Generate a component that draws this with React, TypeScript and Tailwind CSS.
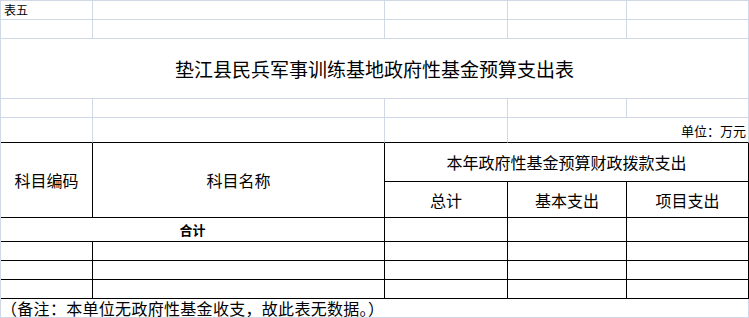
export default function App() {
  // light = excel gridline, dark = table border
  const lt = "border-r border-b border-r-[#d0d7e5] border-b-[#d0d7e5]";
  const ltB = "border-r border-b border-r-[#d0d7e5] border-b-black";
  const bk = "border-r border-b border-black";

  return (
    <div className="w-[749px] h-[318px] bg-white text-black font-['Noto_Sans_CJK_SC',sans-serif] border-t border-l border-[#d0d7e5] grid grid-cols-[92px_292px_123px_119px_122px] grid-rows-[19px_19px_60px_19px_25px_39px_36px_24px_19px_19px_19px_19px] leading-none">
      {/* row 0 */}
      <div className={`${lt} flex items-center pl-[3px] text-[12px]`}>表五</div>
      <div className={lt}></div>
      <div className={lt}></div>
      <div className={lt}></div>
      <div className={lt}></div>

      {/* row 1 */}
      <div className={lt}></div>
      <div className={lt}></div>
      <div className={lt}></div>
      <div className={lt}></div>
      <div className={lt}></div>

      {/* title */}
      <div className={`${lt} col-span-5 flex items-center justify-center text-[19px]`}>
        垫江县民兵军事训练基地政府性基金预算支出表
      </div>

      {/* row 3 */}
      <div className={lt}></div>
      <div className={lt}></div>
      <div className={lt}></div>
      <div className={lt}></div>
      <div className={lt}></div>

      {/* unit row */}
      <div className={ltB}></div>
      <div className={ltB}></div>
      <div className={ltB}></div>
      <div className={`${ltB} col-span-2 flex items-center justify-end pr-[2px] text-[13px]`}>单位：万元</div>

      {/* header */}
      <div className={`${bk} row-span-2 flex items-center justify-center text-[16px]`}>科目编码</div>
      <div className={`${bk} row-span-2 flex items-center justify-center text-[16px]`}>科目名称</div>
      <div className={`${bk} col-span-3 flex items-center justify-center text-[16px]`}>本年政府性基金预算财政拨款支出</div>
      <div className={`${bk} flex items-center justify-center text-[16px]`}>总计</div>
      <div className={`${bk} flex items-center justify-center text-[16px]`}>基本支出</div>
      <div className={`${bk} flex items-center justify-center text-[16px]`}>项目支出</div>

      {/* total */}
      <div className={`${bk} col-span-2 flex items-center justify-center text-[13px] font-bold`}>合计</div>
      <div className={bk}></div>
      <div className={bk}></div>
      <div className={bk}></div>

      {/* empty rows */}
      {[0, 1, 2].map((r) => (
        <div key={r} className="contents">
          <div className={bk}></div>
          <div className={bk}></div>
          <div className={bk}></div>
          <div className={bk}></div>
          <div className={bk}></div>
        </div>
      ))}

      {/* note */}
      <div className={`${lt} col-span-5 flex items-center text-[16px] tracking-[0.3px] whitespace-nowrap`}>
        （备注：本单位无政府性基金收支，故此表无数据。）
      </div>
    </div>
  );
}
